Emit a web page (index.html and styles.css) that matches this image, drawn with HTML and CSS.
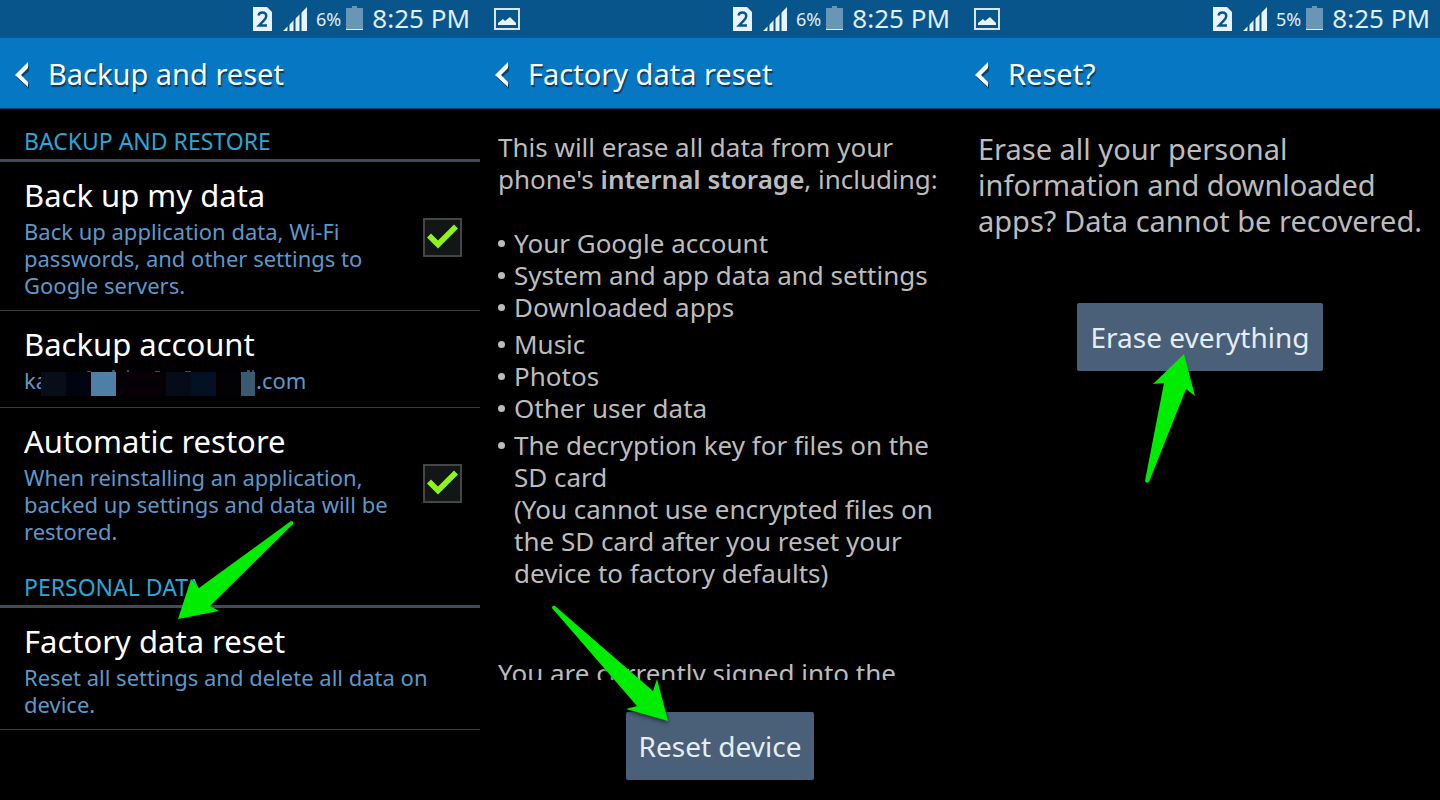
FILE: index.html
```
<!DOCTYPE html>
<html lang="en">
<head>
<meta charset="utf-8">
<title>Factory data reset</title>
<link rel="stylesheet" href="styles.css">
</head>
<body>
<svg class="defs" aria-hidden="true">
  <symbol id="sim" viewBox="0 0 19 24"><path d="M0 0H14L19 5V24H0Z" fill="#e8f3fb"/><path d="M5.500 8.500Q6 5.500 9.500 5.500T13.300 9Q13.300 11 10.500 13.800L6 18.500H14" fill="none" stroke="#07558b" stroke-width="2.400"/></symbol>
  <symbol id="signal" viewBox="0 0 24 24"><path d="M0 24L5 19V24ZM6 18L11 13V24H6ZM12 12L17 7V24H12ZM18 6L24 0V24H18Z" fill="#e8f3fb"/><path d="M5.500 0V24M11.500 0V24M17.500 0V24" stroke="#07558b" stroke-width="2"/></symbol>
  <symbol id="battery" viewBox="0 0 17 24"><path d="M6 0H11V2H17V24H0V2H6Z" fill="#6896b8"/><path d="M0 23H17V24H0Z" fill="#e8f3fb"/></symbol>
  <symbol id="picture" viewBox="0 0 26 22"><path d="M1 1H25V21H1Z" fill="none" stroke="#d5e7f4" stroke-width="2"/><path d="M4 17V15L9 11L11 13L16 9L22 15V17Z" fill="#e8f3fb"/></symbol>
  <symbol id="back" viewBox="-1 -3 16 30"><path d="M14 4V9L7 15L14 23V27L1 15Z" fill="#0a3f66"/><path d="M13 0V6L6 13L13 20V25L0 13Z" fill="#fff"/></symbol>
</svg>
<main class="screens">
  <section class="screen">
    <div class="status">
      <svg class="sim"><use href="#sim"/></svg><svg class="signal"><use href="#signal"/></svg><span class="percent">6%</span><svg class="battery"><use href="#battery"/></svg><span class="clock">8:25 PM</span>
    </div>
    <header class="bar"><button class="back" aria-label="Back"><svg><use href="#back"/></svg></button><h1>Backup and reset</h1></header>
    <h2 class="group">BACKUP AND RESTORE</h2>
    <label class="item">
      <span class="label"><span class="name">Back up my data</span><span class="desc">Back up application data, Wi-Fi<br>passwords, and other settings to<br>Google servers.</span></span>
      <input class="check" type="checkbox" checked>
    </label>
    <div class="item">
      <div class="label"><span class="name">Backup account</span>
        <span class="desc account"><span class="user">ka</span><svg class="mosaic" viewBox="0 0 214 26" aria-hidden="true"><path d="M46 1h4v1h-4zM71 0h3v2h-3zM86 0h2v2h-2zM114 1h5v1h-5zM144 1h6v1h-6zM206 0h3v2h-3zM211 0h2v2h-2z" fill="#31516d"/><path d="M0 2h25v24H0z" fill="#080e18"/><path d="M25 2h25v24H25z" fill="#01040e"/><path d="M50 2h25v24H50z" fill="#4e80a6"/><path d="M75 2h50v24H75z" fill="#060006"/><path d="M125 2h25v24H125z" fill="#050b17"/><path d="M150 2h25v24H150z" fill="#041024"/><path d="M175 2h25v24H175z" fill="#020104"/><path d="M200 2h14v24H200z" fill="#385b70"/></svg><span>.com</span></span>
      </div>
    </div>
    <label class="item last">
      <span class="label"><span class="name">Automatic restore</span><span class="desc">When reinstalling an application,<br>backed up settings and data will be<br>restored.</span></span>
      <input class="check" type="checkbox" checked>
    </label>
    <h2 class="group">PERSONAL DATA</h2>
    <div class="item">
      <div class="label"><span class="name">Factory data reset</span><span class="desc">Reset all settings and delete all data on<br>device.</span></div>
      <svg class="arrow arrow-item" viewBox="0 0 118 100" aria-hidden="true"><path d="M114 1Q117 1 116 4L33 86L42 91L1 99L14 59L22 68Z"/></svg>
    </div>
  </section>

  <section class="screen">
    <div class="status">
      <svg class="picture"><use href="#picture"/></svg><svg class="sim"><use href="#sim"/></svg><svg class="signal"><use href="#signal"/></svg><span class="percent">6%</span><svg class="battery"><use href="#battery"/></svg><span class="clock">8:25 PM</span>
    </div>
    <header class="bar"><button class="back" aria-label="Back"><svg><use href="#back"/></svg></button><h1>Factory data reset</h1></header>
    <div class="details">
      <p>This will erase all data from your<br>phone's <strong>internal storage</strong>, including:</p>
      <ul class="first"><li>Your Google account</li><li>System and app data and settings</li><li>Downloaded apps</li></ul>
      <ul><li>Music</li><li>Photos</li><li>Other user data</li></ul>
      <ul><li>The decryption key for files on the<br>SD card<br>(You cannot use encrypted files on<br>the SD card after you reset your<br>device to factory defaults)</li></ul>
      <p class="signed">You are currently signed into the</p>
    </div>
    <div class="action action-bottom">
      <button class="button">Reset device</button>
      <svg class="arrow arrow-reset" viewBox="0 0 118 118" aria-hidden="true"><path d="M1 3Q1 0 4 1L102 86L106 74L117 116L75 104L86 101Z"/></svg>
    </div>
  </section>

  <section class="screen">
    <div class="status">
      <svg class="picture"><use href="#picture"/></svg><svg class="sim"><use href="#sim"/></svg><svg class="signal"><use href="#signal"/></svg><span class="percent">5%</span><svg class="battery"><use href="#battery"/></svg><span class="clock">8:25 PM</span>
    </div>
    <header class="bar"><button class="back" aria-label="Back"><svg><use href="#back"/></svg></button><h1>Reset?</h1></header>
    <p class="question">Erase all your personal<br>information and downloaded<br>apps? Data cannot be recovered.</p>
    <div class="action">
      <button class="button">Erase everything</button>
      <svg class="arrow arrow-erase" viewBox="0 0 52 130" aria-hidden="true"><path d="M2 127Q3 130 6 128L43 35L52 42L41 0L10 30L21 29Z"/></svg>
    </div>
  </section>
</main>
</body>
</html>
```
FILE: styles.css
```
* { box-sizing: border-box; }
body { margin: 0; background: #000; color: #fff; font-family: "Noto Sans", sans-serif; }
h1, h2, p, ul { margin: 0; padding: 0; font-weight: 400; }
button { font-family: inherit; border: 0; cursor: pointer; }
.defs { position: absolute; width: 0; height: 0; }
.screens { display: grid; grid-template-columns: repeat(3, 1fr); min-height: 100vh; }
.screen { display: flex; flex-direction: column; min-width: 0; white-space: nowrap; }

.status { display: flex; align-items: center; justify-content: flex-end; height: 38px; padding: 0 10px 0 14px; background: #07558b; color: #e0eef8; }
.status svg { flex: none; }
.sim { width: 19px; height: 24px; margin-right: 11px; }
.signal { width: 24px; height: 24px; margin-right: 9px; }
.battery { width: 17px; height: 24px; margin: 0 9px 2px 5px; }
.picture { width: 26px; height: 22px; margin-right: auto; }
.percent { font-size: 18px; line-height: 24px; }
.clock { padding-bottom: 2px; font-size: 26px; line-height: 36px; }

.bar { display: flex; align-items: center; height: 71px; padding: 2px 14px 0; background: #0577c3; border-bottom: 1px solid #07406c; }
.bar h1 { font-size: 29px; line-height: 40px; text-shadow: 1px 2px 1px #06395d; }
.back { display: flex; padding: 0; margin-right: 18px; background: none; }
.back svg { width: 16px; height: 30px; }

.group { height: 53px; padding: 16px 24px 0; border-bottom: 3px solid #404a5a; color: #2ba6d6; font-size: 23px; line-height: 32px; }
.item { position: relative; display: flex; align-items: center; justify-content: space-between; padding: 13px 18px 11px 24px; border-bottom: 1px solid #3a3a3a; }
.last { padding-bottom: 10px; border-bottom: 0; }
.label { display: flex; flex-direction: column; gap: 3px; }
.name { font-size: 31px; line-height: 40px; }
.desc { color: #5e97c9; font-size: 22px; line-height: 27px; }
.account { display: flex; height: 29px; }
.user { width: 17px; overflow: hidden; }
.mosaic { width: 214px; height: 26px; margin-right: 1px; align-self: flex-end; }
.check { position: relative; flex: none; width: 39px; height: 39px; margin: 0; appearance: none; background: #131617; border: 2px solid #454545; }
.check:checked::before { content: ""; display: block; width: 35px; height: 35px; background: #8ef41c; clip-path: polygon(2px 18px, 6px 14px, 13px 21px, 29px 5px, 33px 9px, 13px 29px); }

.details { flex: 1 1 0; height: 0; margin-bottom: 32px; padding: 22px 18px 0; overflow: hidden; color: #bcbcbc; font-size: 26px; line-height: 32px; }
.details strong { font-weight: 600; }
.details ul { margin-top: 5px; list-style: none; }
.details .first { margin-top: 32px; }
.details li { position: relative; padding-left: 16px; }
.details li::before { content: ""; position: absolute; left: 0; top: 13px; width: 7px; height: 7px; border-radius: 50%; background: #bcbcbc; }
.details .signed { margin-top: 68px; }

.question { padding: 22px 18px 0; color: #bcbcbc; font-size: 29px; line-height: 36px; }
.action { position: relative; align-self: center; margin-top: 64px; }
.action-bottom { margin: 0 0 20px; }
.button { display: block; height: 68px; padding: 0 13px; border-radius: 2px; background: #496078; color: #e6edf5; font-size: 28px; }

.arrow { position: absolute; fill: #00ec00; pointer-events: none; }
.arrow-item { left: 177px; top: -88px; width: 118px; height: 100px; }
.arrow-reset { left: -75px; top: -107px; width: 118px; height: 118px; filter: drop-shadow(0 2px 2px #0008); }
.arrow-erase { left: 66px; top: 51px; width: 52px; height: 130px; }
```
